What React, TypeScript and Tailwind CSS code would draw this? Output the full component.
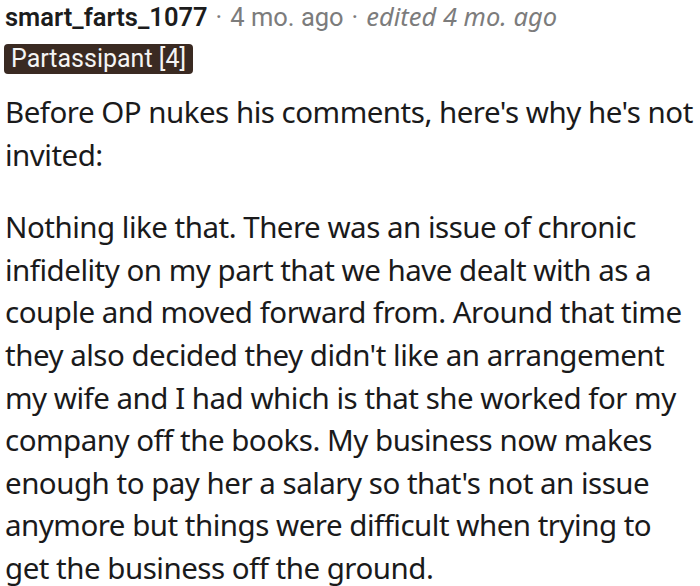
export default function App() {
  return (
    <div className="w-[700px] h-[586px] overflow-hidden bg-white pl-[5px]" style={{ fontFamily: '"Noto Sans", sans-serif' }}>
      <div className="flex items-baseline h-[34px] pt-[1px] text-[25.5px] leading-[30px]" style={{ fontFamily: 'Roboto, "Noto Sans", sans-serif' }}>
        <span className="font-semibold text-[#1c1c1c]">smart_farts_1077</span>
        <span className="text-[#7c7c7c] mx-[8px]">·</span>
        <span className="text-[#7c7c7c]">4 mo. ago</span>
        <span className="text-[#7c7c7c] mx-[8px]">·</span>
        <span className="text-[#7c7c7c] italic" style={{ fontFamily: '"Noto Sans", sans-serif' }}>edited 4 mo. ago</span>
      </div>
      <div className="mt-[10px] -ml-[1px] inline-flex items-center h-[30px] px-[7px] rounded-[4px] bg-[#3a2a22] text-[#f4f4f4] text-[25px]" style={{ fontFamily: 'Roboto, sans-serif' }}>
        Partassipant [4]
      </div>
      <div className="text-[29.5px] leading-[42.6px] text-[#1a1a1b] mt-[17px] tracking-[-0.5px]">
        <p>Before OP nukes his comments, here's why he's not invited:</p>
        <p className="mt-[30px]">Nothing like that. There was an issue of chronic infidelity on my part that we have dealt with as a couple and moved forward from. Around that time they also decided they didn't like an arrangement my wife and I had which is that she worked for my company off the books. My business now makes enough to pay her a salary so that's not an issue anymore but things were difficult when trying to get the business off the ground.</p>
      </div>
    </div>
  );
}
